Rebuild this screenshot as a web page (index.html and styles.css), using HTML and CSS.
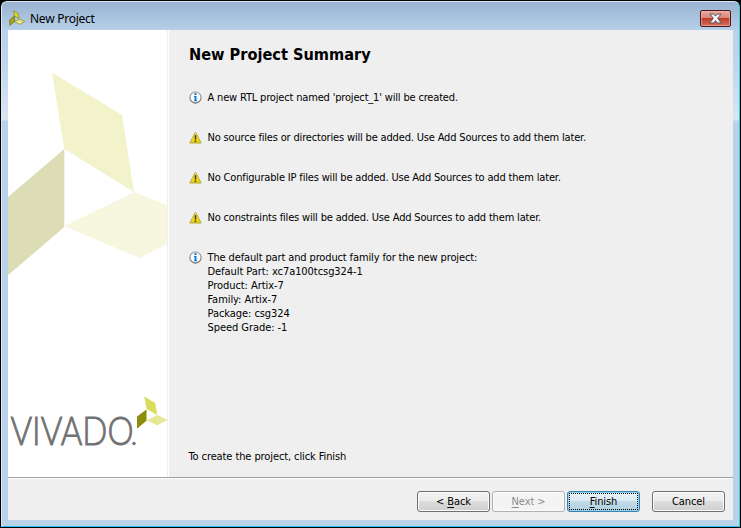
FILE: index.html
```html
<!DOCTYPE html>
<html lang="en">
<head>
<meta charset="utf-8">
<title>New Project</title>
<link rel="stylesheet" href="styles.css">
</head>
<body>
<svg width="0" height="0" class="defs">
  <defs>
    <linearGradient id="gold" x1="0" y1="0" x2="0" y2="1"><stop offset="0" stop-color="#f4ec70"/><stop offset=".55" stop-color="#f5e22a"/><stop offset="1" stop-color="#e2cb10"/></linearGradient>
    <linearGradient id="ring" x1="0" y1="0" x2="0" y2="1"><stop offset="0" stop-color="#a5a5a5"/><stop offset="1" stop-color="#656565"/></linearGradient>
    <symbol id="info" viewBox="0 0 13 13"><circle cx="6.5" cy="6.5" r="5.6" fill="#f8fbfd" stroke="url(#ring)" stroke-width="1.1"/><path d="M5.5 2h2v2h-2zM5 5h2.500v5h-2V6H5z" fill="#1479cb"/><path d="M5 9.300h3v1H5z" fill="#1479cb"/></symbol>
    <symbol id="warn" viewBox="0 0 13 13"><path d="M6.500 1.200 12.200 12H.8z" fill="url(#gold)" stroke="#b9aa3c" stroke-width="1" stroke-linejoin="round"/><path d="M5.600 4.200h1.800L7.200 8.700H5.800zM5.700 9.600h1.600v1.500H5.700z" fill="#4b3e00"/></symbol>
  </defs>
</svg>
<div class="window">
  <header class="titlebar">
    <svg class="app-icon" width="16" height="17" viewBox="0 0 16 17"><path d="M4.500.8 9 3.200l1.200 5.300-4.700-2.600z" fill="#d9d631" stroke="#8a8a12" stroke-width=".7"/><path d="M.7 9.800 5.500 6v5.500L.9 15.400z" fill="#a7a51b" stroke="#6c6b0a" stroke-width=".7"/><path d="m5.600 11.600 5-2.400 5 2.200-5 3z" fill="#e9e795" stroke="#95921b" stroke-width=".8"/></svg>
    <h1>New Project</h1>
    <button class="close" aria-label="Close"><svg width="13" height="11" viewBox="0 0 13 11"><path d="M1 1h3.600l1.900 2.100L8.400 1H12L8.700 5.300 12.200 10H8.400L6.500 7.600 4.600 10H.8l3.500-4.700z" fill="#f5f5f5" stroke="#565b69" stroke-width="1"/></svg></button>
  </header>
  <main class="client">
    <div class="page">
      <aside>
        <svg width="160" height="447" viewBox="8 30 160 447">
          <path d="m52 72.500 70 42.500 12 77-69.700-43z" fill="#f2f2cb"/>
          <path d="M64.300 149v78L8 275.300V197z" fill="#dcdcb5"/>
          <path d="m64.300 226.300 69.700-34.300 33 13v39.500L139.500 258z" fill="#f7f7df"/>
          <text class="brand" x="10.500" y="445" textLength="123" lengthAdjust="spacingAndGlyphs">VIVADO</text>
          <circle cx="134" cy="443.500" r="1.700" fill="#707173"/>
          <path d="m144.200 396.500 11 6.500 2 12-10.600-6z" fill="#dadd5b"/>
          <path d="M146.500 409.500v11.300l-9.500 8v-12.300z" fill="#8b8d0b"/>
          <path d="m146.700 420.300 10.500-5.300 10.500 5-10.500 5.300z" fill="#e5e794"/>
        </svg>
      </aside>
      <section class="summary">
        <h2>New Project Summary</h2>
        <div class="note"><svg width="13" height="13"><use href="#info"/></svg><p class="tight">A new RTL project named 'project_1' will be created.</p></div>
        <div class="note"><svg width="13" height="13"><use href="#warn"/></svg><p class="tight">No source files or directories will be added. Use Add Sources to add them later.</p></div>
        <div class="note"><svg width="13" height="13"><use href="#warn"/></svg><p class="tight">No Configurable IP files will be added. Use Add Sources to add them later.</p></div>
        <div class="note"><svg width="13" height="13"><use href="#warn"/></svg><p class="tight">No constraints files will be added. Use Add Sources to add them later.</p></div>
        <div class="note"><svg width="13" height="13"><use href="#info"/></svg><p><span class="lead">The default part and product family for the new project:</span><br>Default Part: xc7a100tcsg324-1<br>Product: Artix-7<br>Family: Artix-7<br>Package: csg324<br>Speed Grade: -1</p></div>
        <p class="hint">To create the project, click Finish</p>
      </section>
    </div>
    <footer>
      <button class="btn">&lt; <u>B</u>ack</button>
      <button class="btn off" disabled><u>N</u>ext &gt;</button>
      <button class="btn primary"><span><u>F</u>inish</span></button>
      <button class="btn cancel">Cancel</button>
    </footer>
  </main>
</div>
</body>
</html>
```
FILE: styles.css
```css
* { box-sizing: border-box; }
body { margin: 0; width: 741px; height: 528px; background: #000; overflow: hidden; font: 11px/14px "DejaVu Sans Condensed", "DejaVu Sans", sans-serif; color: #000; }
h1, h2, p { margin: 0; }
.defs { display: block; position: absolute; }
.window {
  width: 739px; height: 526px; margin: 1px 1px 1px; padding: 0 6px 6px;
  border: 1px solid #dce9f5; border-right-color: #2fcbe8; border-bottom-color: #20c6e5;
  border-radius: 6px 6px 0 0;
  background: linear-gradient(#98b3d1, #b9d1ea 30px, #bfd5ec 60px, #d8e5f3 118px, #b9d1ea 119px);
}
.titlebar { height: 28px; display: flex; align-items: flex-start; padding: 7px 2px 0 1px; }
.app-icon { margin-top: 1px; }
h1 { font: 12px/15px "Noto Sans", sans-serif; letter-spacing: -.25px; margin: 2px 0 0 5px; flex: 1; }
.close { width: 31px; height: 17px; margin-top: 1px; padding: 0; border: 1px solid #4b1720; border-radius: 2px; background: linear-gradient(#e9a99d, #d98778 45%, #bd3d28 50%, #d3705c); box-shadow: inset 0 0 0 1px #edb4aa99; display: flex; justify-content: center; align-items: center; }
.client { width: 725px; height: 490px; background: #efefef; }
.page { height: 447px; display: flex; }
aside { width: 161px; background: linear-gradient(90deg, #fff 159px, #efefef 159px 160px, #fff 160px); }
aside svg { display: block; }
.brand { font: 300 40px Lato, sans-serif; fill: #707173; stroke: #707173; stroke-width: .9px; }
.summary { flex: 1; padding: 14px 0 0 20px; display: flex; flex-direction: column; }
h2 { font: bold 16.2px/22px "DejaVu Sans Condensed", sans-serif; margin-bottom: 24px; white-space: nowrap; }
.note { display: flex; gap: 6px; min-height: 40px; white-space: nowrap; }
.note svg { margin-top: 1px; flex: none; }
.note p { margin: 1px 0 -1px -.5px; letter-spacing: -.06px; }
.note .tight { letter-spacing: -.17px; }
.lead { letter-spacing: -.13px; }
.hint { margin: auto 0 13px -.5px; letter-spacing: -.1px; }
footer { height: 43px; border-top: 1px solid #a0a0a0; box-shadow: inset 0 1px #fff; padding: 13px 8px 0; display: flex; gap: 2px; justify-content: flex-end; }
.btn { width: 73px; height: 21px; padding: 0; border: 1px solid #707070; border-radius: 3px; background: linear-gradient(#f3f3f3, #ebebeb 48%, #dddddd 50%, #cfcfcf); box-shadow: inset 0 0 0 1px #fbfbfb; font: inherit; letter-spacing: -.1px; color: #000; }
.btn u { text-underline-offset: 2px; text-decoration-thickness: 1px; }
.btn.off { color: #8b8b8b; border-color: #adb2b5; background: #f4f4f4; }
.btn.primary { padding: 1px; border-color: #3c7fb1; background: linear-gradient(#eaf3f8, #d9e9f2 48%, #c2dbe8 50%, #adcfe1); box-shadow: inset 0 0 0 1px #8bd3ee; }
.btn.primary span { display: block; height: 17px; line-height: 15px; border: 1px dotted #000; }
.cancel { margin-left: 10px; }
```
